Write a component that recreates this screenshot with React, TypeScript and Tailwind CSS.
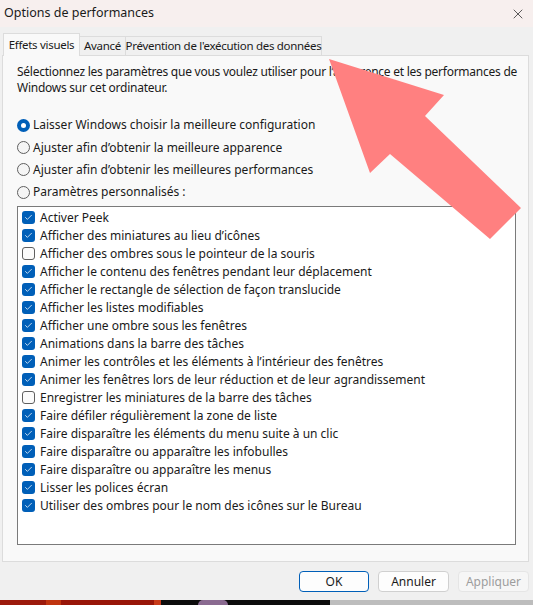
import { Check, X } from 'lucide-react';

const options: [string, boolean][] = [
  ['Activer Peek', true],
  ['Afficher des miniatures au lieu d’icônes', true],
  ['Afficher des ombres sous le pointeur de la souris', false],
  ['Afficher le contenu des fenêtres pendant leur déplacement', true],
  ['Afficher le rectangle de sélection de façon translucide', true],
  ['Afficher les listes modifiables', true],
  ['Afficher une ombre sous les fenêtres', true],
  ['Animations dans la barre des tâches', true],
  ['Animer les contrôles et les éléments à l’intérieur des fenêtres', true],
  ['Animer les fenêtres lors de leur réduction et de leur agrandissement', true],
  ['Enregistrer les miniatures de la barre des tâches', false],
  ['Faire défiler régulièrement la zone de liste', true],
  ['Faire disparaître les éléments du menu suite à un clic', true],
  ['Faire disparaître ou apparaître les infobulles', true],
  ['Faire disparaître ou apparaître les menus', true],
  ['Lisser les polices écran', true],
  ['Utiliser des ombres pour le nom des icônes sur le Bureau', true],
];

const radios = [
  'Laisser Windows choisir la meilleure configuration',
  'Ajuster afin d’obtenir la meilleure apparence',
  'Ajuster afin d’obtenir les meilleures performances',
  'Paramètres personnalisés :',
];

function Radio({ on }: { on: boolean }) {
  return on ? (
    <span className="w-[13px] h-[13px] rounded-full bg-[#005fb8] flex items-center justify-center shrink-0">
      <span className="w-[5px] h-[5px] rounded-full bg-white" />
    </span>
  ) : (
    <span className="w-[13px] h-[13px] rounded-full border border-[#5f5f5f] bg-[#f5f5f5] shrink-0" />
  );
}

function Box({ on }: { on: boolean }) {
  return on ? (
    <span className="w-[13px] h-[13px] rounded-[3px] bg-[#005fb8] flex items-center justify-center shrink-0">
      <Check className="w-[9px] h-[9px] text-white" strokeWidth={2} />
    </span>
  ) : (
    <span className="w-[13px] h-[13px] rounded-[3px] border border-[#5f5f5f] bg-[#fbfbfb] shrink-0" />
  );
}

export default function App() {
  return (
    <div className="relative w-[533px] h-[605px] flex flex-col bg-[#f0f0f0] text-[12px] text-[#1a1a1a] font-['Noto_Sans',sans-serif] overflow-hidden">
      <div className="h-[27px] bg-[#f7efee] flex items-center justify-between pl-[4px] pr-[7px] shrink-0">
        <span className="text-[12.5px] text-[#1a1a1a]">Options de performances</span>
        <X className="w-[16px] h-[16px] text-[#333]" strokeWidth={1.2} />
      </div>

      <div className="flex-1 flex flex-col pl-[2px] pr-[4px]">
        <div className="flex items-end h-[28px] pl-[1px] whitespace-nowrap text-[11.5px] tracking-[-0.3px]">
          <div className="h-[23px] w-[77px] bg-[#f9f9f9] border border-b-0 border-[#dcdcdc] flex items-center justify-center relative top-[1px] z-10">
            Effets visuels
          </div>
          <div className="h-[19px] w-[46px] border border-b-0 border-l-0 border-[#dcdcdc] flex items-center justify-center">
            Avancé
          </div>
          <div className="h-[19px] w-[196px] border border-b-0 border-l-0 border-[#dcdcdc] flex items-center justify-center">
            Prévention de l'exécution des données
          </div>
        </div>

        <div className="h-[507px] bg-[#f9f9f9] border border-[#dcdcdc] pl-[14px] pr-[2px] pt-[8px] flex flex-col">
          <p className="leading-[16px] tracking-[-0.25px]">
            Sélectionnez les paramètres que vous voulez utiliser pour l’apparence et les performances de Windows sur cet ordinateur.
          </p>
          <div className="mt-[18px] flex flex-col">
            {radios.map((r, i) => (
              <div key={r} className="h-[22.4px] flex items-center gap-[3px]">
                <Radio on={i === 0} />
                <span>{r}</span>
              </div>
            ))}
          </div>
          <div className="mt-[2px] h-[339px] mr-[10px] bg-white border border-[#7a7a7a] pt-[2px] pl-[4px]">
            {options.map(([label, on]) => (
              <div key={label} className="h-[18px] flex items-center gap-[5px]">
                <Box on={on} />
                <span className="whitespace-nowrap">{label}</span>
              </div>
            ))}
          </div>
        </div>

        <div className="flex justify-end gap-[9px] mt-[9px]">
          <button className="w-[70px] h-[21px] rounded-[4px] border border-[#005fb8] bg-[#fdfdfd]">OK</button>
          <button className="w-[71px] h-[21px] rounded-[4px] border border-[#d0d0d0] bg-[#fdfdfd]">Annuler</button>
          <button className="w-[71px] h-[21px] rounded-[4px] border border-[#e5e5e5] bg-[#f6f6f6] text-[#9d9d9d]">Appliquer</button>
        </div>
      </div>

      <div className="h-[5px] flex shrink-0">
        <div className="w-[46px] bg-[#9c1a0c]" />
        <div className="w-[15px] bg-[#c0340f]" />
        <div className="w-[93px] bg-[#981508]" />
        <div className="w-[7px] bg-[#c83a18]" />
        <div className="w-[34px] bg-[#0c0c0c]" />
        <div className="w-[36px] bg-[#0c0c0c] flex justify-center">
          <div className="w-[30px] h-[5px] rounded-t-full bg-[#8a6a90]" />
        </div>
        <div className="w-[99px] bg-[#0c0c0c]" />
        <div className="flex-1 bg-[#bdbdbd]" />
      </div>

      <svg className="absolute left-0 top-0 pointer-events-none" width="533" height="605">
        <polygon points="329,59 444,95 425,116 521,208 490,239 390,154 370,173" fill="#ff8080" />
      </svg>
    </div>
  );
}
